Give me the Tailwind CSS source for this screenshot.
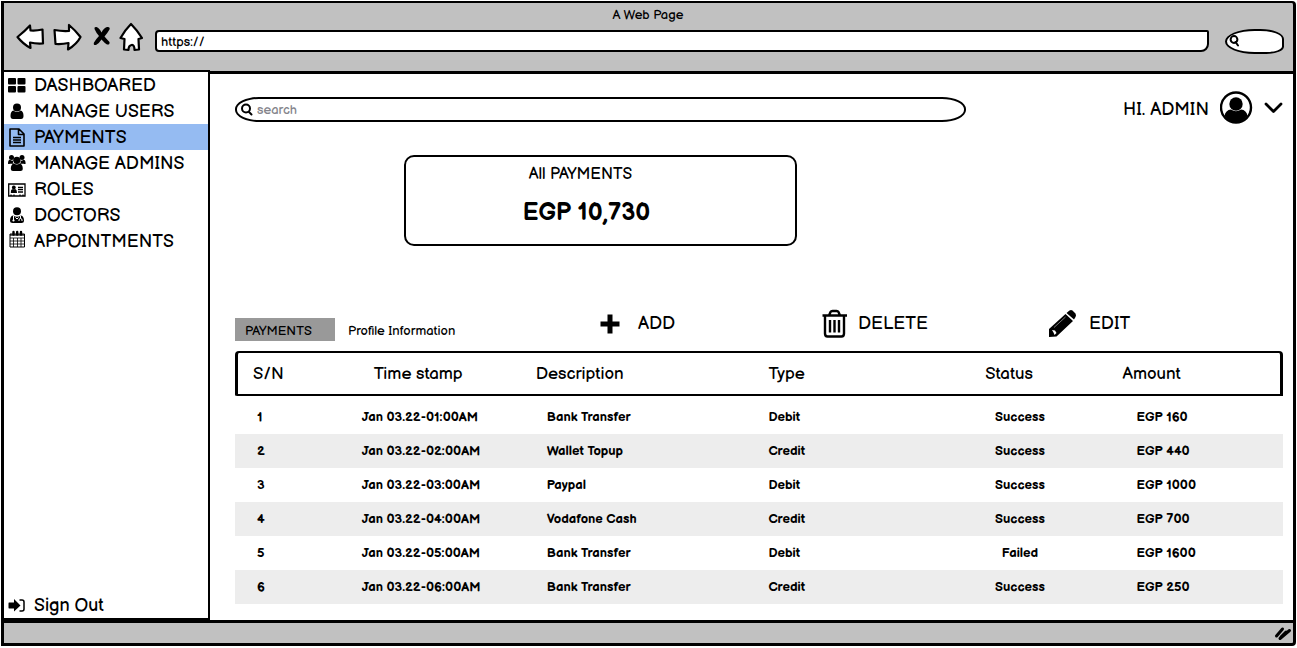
<!DOCTYPE html>
<html lang="en">
<head>
<meta charset="utf-8">
<meta name="viewport" content="width=device-width, initial-scale=1">
<title>A Web Page</title>
<script src="https://cdn.jsdelivr.net/npm/@tailwindcss/browser@4"></script>
</head>
<body class="bg-white text-black font-['Balsamiq_Sans',Inter,sans-serif]">
<div class="flex min-h-screen flex-col px-px pt-px pb-0.5">
  <!-- Browser chrome -->
  <header class="flex h-[73px] shrink-0 flex-col rounded-tr-sm border-x-3 border-t-2 border-b-3 border-black bg-[#c1c1c1] pr-[9px] pl-3">
    <p class="h-[18px] pt-0.5 pr-1 text-center text-[13px] leading-5">A Web Page</p>
    <div class="flex h-8 items-center">
      <button aria-label="Back" class="mr-2"><svg class="block" width="29" height="30" viewBox="0 0 29 30" fill="#fff" stroke="#000" stroke-width="2.2" stroke-linejoin="round"><path d="M1.500 15Q9 9 14 3.500L14.500 8.500Q20 9 26.500 7.500L27 21.500Q20 22 14 20.500L14.500 26Q7 22 1.500 15Z"/></svg></button>
      <button aria-label="Forward" class="mr-2"><svg class="block" width="30" height="30" viewBox="0 0 30 30" fill="#fff" stroke="#000" stroke-width="2.2" stroke-linejoin="round"><path d="M27.500 15Q22 8 16 3L16 9Q9 9.500 1.500 8L2.500 22Q9 22.500 15.500 21L15 27.500Q24 22 27.500 15Z"/></svg></button>
      <button aria-label="Stop" class="mr-2 pl-0.5"><svg class="block" width="18" height="30" viewBox="0 0 18 30"><path d="M1.500 7Q1 4.500 3.500 5 6.500 6 8.500 10.500 10.500 6 14 5Q17.500 4.500 16.500 7.500 14.500 11 11.500 14.500 14.500 18 16.500 20Q17 23 14 22.500 11.500 21 8.500 17.500 6 21.500 3 23 0 23.500 1 20.500 3 17 6 14 3.500 11.500 1.500 7Z"/></svg></button>
      <button aria-label="Home" class="mr-3"><svg class="block" width="24" height="30" viewBox="0 0 24 30" fill="#fff" stroke="#000" stroke-width="2.2" stroke-linejoin="round"><path d="M12 2Q6 8 1.500 16L5.500 17 5 27.500 9.500 28Q9.500 23.500 12.500 23T15.500 28L20 27.500 19.500 17 23 16Q18 8 12 2Z"/></svg></button>
      <input aria-label="Address" value="https://" class="mt-2 h-[22px] min-w-0 flex-1 rounded-[4px_2px_8px_4px] border-2 border-black bg-white px-1 pt-0.5 text-[13px] outline-none">
      <label class="mt-2 ml-4 flex h-[25px] w-[59px] items-center rounded-[50%_40%_30%_50%] border-2 border-black bg-white pl-0.5">
        <svg class="shrink-0" width="11" height="12" viewBox="0 0 11 12" fill="none" stroke="#000" stroke-width="2" stroke-linecap="round"><circle cx="5" cy="4.500" r="3.400"/><path d="M6.500 7 9 10.500"/></svg>
        <input aria-label="Browser search" class="min-w-0 flex-1 bg-transparent text-[13px] outline-none">
      </label>
    </div>
  </header>

  <div class="flex flex-1 border-r-3 border-black">
    <!-- Side menu -->
    <nav aria-label="Main" class="-mt-1 flex w-[209px] shrink-0 flex-col border-2 border-l-3 border-black bg-white text-[18px] leading-[26px] [&_svg]:-mt-0.5">
      <a href="#" class="flex h-[26px] items-center gap-2 pt-0.5 pl-1"><svg width="18" height="18" viewBox="0 0 18 18"><rect x="0" y="2" width="8" height="6.500" rx="1"/><rect x="9.500" y="2" width="8" height="6.500" rx="1"/><rect x="0" y="10" width="8" height="6.500" rx="1"/><rect x="9.500" y="10" width="8" height="6.500" rx="1"/></svg>DASHBOARED</a>
      <a href="#" class="flex h-[26px] items-center gap-2 pt-0.5 pl-1"><svg width="18" height="18" viewBox="0 0 18 18"><circle cx="9" cy="5.500" r="4"/><path d="M5.500 8.500Q9 11.500 12.500 8.500 15.500 9 15.500 14 15.500 17 13 17H5Q2.500 17 2.500 14 2.500 9 5.500 8.500Z"/></svg>MANAGE USERS</a>
      <a href="#" aria-current="page" class="flex h-[26px] items-center gap-2 bg-[#95bbf2] pt-0.5 pl-1"><svg width="18" height="20" viewBox="0 0 18 20" fill="none" stroke="#000" stroke-width="1.600" stroke-linejoin="round"><path d="M2 2H11L16 7V19H2ZM10.500 2V7.500H16M5 10.500H13M5 13H13M5 15.500H13"/></svg>PAYMENTS</a>
      <a href="#" class="flex h-[26px] items-center gap-2 pt-0.5 pl-1"><svg width="18" height="18" viewBox="0 0 18 18"><circle cx="3.500" cy="3.500" r="2.500"/><circle cx="14" cy="3.500" r="2.500"/><circle cx="8.800" cy="6.300" r="3.600"/><path d="M0 9.500Q0 6 2 5.800 4 7 5 6.500 4.500 9 5.800 9.800H2Q0 10.500 0 9.500ZM17.600 9.500Q17.600 6 15.600 5.800 13.600 7 12.600 6.500 13 9 11.800 9.800H15.600Q17.600 10.500 17.600 9.500ZM6 9.500Q9 11.500 11.600 9.500 14.800 10 14.800 15 14.800 17 12.500 17H5Q2.800 17 2.800 15 2.800 10 6 9.500Z"/></svg>MANAGE ADMINS</a>
      <a href="#" class="flex h-[26px] items-center gap-2 pt-0.5 pl-1"><svg width="18" height="18" viewBox="0 0 18 18"><path fill="none" stroke="#000" stroke-width="1.300" d="M.7 4H17V16H.7ZM3 16V14.500M6 16V14.500M12 16V14.500M15 16V14.500M10 7.500H15M10 9.700H15M10 12H15"/><circle cx="5.800" cy="7.500" r="1.900"/><path d="M4 9.300H7.600Q9 10 9 13H2.800Q2.600 10 4 9.300Z"/></svg>ROLES</a>
      <a href="#" class="flex h-[26px] items-center gap-2 pt-0.5 pl-1"><svg width="18" height="18" viewBox="0 0 18 18"><circle cx="9" cy="5.200" r="4"/><path d="M5 9.500Q9 12 13 9.500 16 10 16 15 16 17 13.500 17H4.500Q2 17 2 15 2 10 5 9.500Z"/><path d="M5.500 10V14M12.500 10V12.500M11 15V14Q11 12.500 12.500 12.500T14 14V15M7.500 11.500 9 13 10.500 11.500" fill="none" stroke="#fff" stroke-width="1"/><circle cx="5.500" cy="14.500" r="1.100" fill="#fff"/></svg>DOCTORS</a>
      <a href="#" class="flex h-[26px] items-center gap-2 pt-0.5 pl-1"><svg width="18" height="22" viewBox="0 0 18 22" fill="none" stroke="#000" stroke-width="1"><path d="M2 4H16.500V17H2Z"/><path d="M2 8H16.500M2 11H16.500M2 14H16.500M5.500 8V17M9.500 8V17M13 8V17" stroke-width=".8"/><path d="M2 5H16.500" stroke-width="1.200"/><path d="M5.500 2V4.500M9.200 2V4.500M13 2V4.500" stroke-width="2.400" stroke-linecap="round"/></svg>APPOINTMENTS</a>
      <a href="#" class="mt-auto flex h-[26px] items-center gap-2 pt-0.5 pl-1"><svg width="18" height="18" viewBox="0 0 18 18"><path d="M1 6.500H6V3L12.500 9.500 6 15.500V12.500H1Q.5 12.500 .5 11.500V7.500Q.5 6.500 1 6.500Z"/><path d="M11.500 4H14Q16 4 16 6V13Q16 15 14 15H11.500" fill="none" stroke="#000" stroke-width="1.500"/></svg>Sign Out</a>
    </nav>

    <main class="flex min-w-0 flex-1 flex-col pt-[17px] pr-[10px] pb-4 pl-[25px]">
      <div class="flex h-[33px] items-center">
        <label class="mt-1 flex h-[25px] w-[731px] min-w-0 shrink items-center gap-1 rounded-[24px/12px] border-2 border-black pl-1">
          <svg class="shrink-0" width="12" height="13" viewBox="0 0 12 13" fill="none" stroke="#000" stroke-width="2" stroke-linecap="round"><circle cx="5" cy="5.500" r="4"/><path d="M8 9 10.500 11.500"/></svg>
          <input type="search" aria-label="Search" placeholder="search" class="min-w-0 flex-1 bg-transparent pt-0.5 text-[13px] outline-none placeholder:text-[#85858c]">
        </label>
        <span class="mt-1 ml-auto text-[18px] whitespace-nowrap">HI. ADMIN</span>
        <svg class="ml-[11px] shrink-0" width="33" height="33" viewBox="0 0 33 33"><circle cx="16" cy="16.500" r="15" fill="#fff" stroke="#000" stroke-width="2.400"/><circle cx="16" cy="13" r="6.700"/><path d="M4.500 25Q5.500 19 11 18.500 16 22 21 18.500 26.500 19 27.500 25 22.500 31.500 16 31.500T4.500 25Z"/></svg>
        <button aria-label="Account menu" class="ml-[11px]"><svg class="block" width="19" height="13" viewBox="0 0 19 13" fill="none" stroke="#000" stroke-width="2.800" stroke-linecap="round" stroke-linejoin="round"><path d="M2 3 9.500 10.500 17 3"/></svg></button>
      </div>

      <section class="mt-[31px] ml-[169px] flex h-[91px] w-[393px] flex-col items-center rounded-[10px] border-2 border-black pt-1 pr-10">
        <h2 class="text-[16px] leading-7">All PAYMENTS</h2>
        <p class="mt-1.5 pl-3 text-2xl leading-9 font-bold">EGP 10,730</p>
      </section>

      <div class="mt-16 grid h-[31px] grid-cols-[365fr_222fr_226fr_235fr]">
        <div class="flex items-end gap-[13px] text-[13px] leading-[23px]">
          <button class="h-[23px] w-[100px] bg-[#999] pt-0.5 pl-2.5 text-left">PAYMENTS</button>
          <button class="h-[23px] pt-0.5">Profile Information</button>
        </div>
        <button class="flex h-[27px] items-center gap-[18px] text-[18px]"><svg width="20" height="20" viewBox="0 0 20 20" stroke="#000" stroke-width="5" stroke-linecap="square"><path d="M10 3V17M3 10H17"/></svg>ADD</button>
        <button class="flex h-[27px] items-center gap-2.5 text-[18px]"><svg width="26" height="29" viewBox="0 0 26 29" fill="none" stroke="#000" stroke-width="2.400" stroke-linejoin="round"><path d="M.5 6.500H25M7 6.500 8.500 3Q9 2 10.500 2H14.500Q16 2 16.500 3L18 6.500M3 6.500V24.500Q3 27.500 5.500 27.500H19.500Q22 27.500 22 24.500V6.500"/><path d="M8 11V23.500M12.500 11V23.500M17 11V23.500"/></svg>DELETE</button>
        <button class="flex h-[27px] items-center gap-[11px] text-[18px]"><svg width="30" height="29" viewBox="0 0 30 29"><path d="M1 20 17.500 5 25 12 8.500 27.500 1 28ZM18.500 4 21.500 1.500Q23 .5 24.500 1.500L27.500 4.500Q28.500 6.500 27.500 8L26 10.500Z"/><path d="M6 18.500 17.500 8" stroke="#777" stroke-width="1"/><path d="M4 21 7 21.500 8.500 24 6.500 26 5.500 23.500Z" fill="#fff"/></svg>EDIT</button>
      </div>

      <table class="mt-2.5 w-full table-fixed border-separate border-spacing-0 text-left text-[13px] font-bold">
        <colgroup><col class="w-[12.1%]"><col class="w-[16.6%]"><col class="w-[22.2%]"><col class="w-[20.7%]"><col class="w-[13.1%]"><col></colgroup>
        <thead class="text-[17px]">
          <tr class="h-[45px]"><th class="rounded-tl-sm rounded-bl-xs border-y-2 border-l-3 border-black pt-0.5 pb-0 pl-[15px] font-normal">S/N</th><th class="border-y-2 border-black pt-0.5 pl-3 font-normal">Time stamp</th><th class="border-y-2 border-black pt-0.5 font-normal">Description</th><th class="border-y-2 border-black pt-0.5 font-normal">Type</th><th class="border-y-2 border-black pt-0.5 font-normal">Status</th><th class="rounded-tr-sm border-y-2 border-r-3 border-black pt-0.5 font-normal">Amount</th></tr>
        </thead>
        <tbody>
          <tr class="h-[38px]"><td class="pt-1.5 pl-[22px]">1</td><td class="pt-1.5">Jan 03.22-01:00AM</td><td class="pt-1.5 pl-[11px]">Bank Transfer</td><td class="pt-1.5">Debit</td><td class="pt-1.5 pr-17 text-center">Success</td><td class="pt-1.5 pl-3.5">EGP 160</td></tr>
          <tr class="h-[34px] bg-[#ededed]"><td class="pt-0.5 pl-[22px]">2</td><td class="pt-0.5">Jan 03.22-02:00AM</td><td class="pt-0.5 pl-[11px]">Wallet Topup</td><td class="pt-0.5">Credit</td><td class="pt-0.5 pr-17 text-center">Success</td><td class="pt-0.5 pl-3.5">EGP 440</td></tr>
          <tr class="h-[34px]"><td class="pt-0.5 pl-[22px]">3</td><td class="pt-0.5">Jan 03.22-03:00AM</td><td class="pt-0.5 pl-[11px]">Paypal</td><td class="pt-0.5">Debit</td><td class="pt-0.5 pr-17 text-center">Success</td><td class="pt-0.5 pl-3.5">EGP 1000</td></tr>
          <tr class="h-[34px] bg-[#ededed]"><td class="pt-0.5 pl-[22px]">4</td><td class="pt-0.5">Jan 03.22-04:00AM</td><td class="pt-0.5 pl-[11px]">Vodafone Cash</td><td class="pt-0.5">Credit</td><td class="pt-0.5 pr-17 text-center">Success</td><td class="pt-0.5 pl-3.5">EGP 700</td></tr>
          <tr class="h-[34px]"><td class="pt-0.5 pl-[22px]">5</td><td class="pt-0.5">Jan 03.22-05:00AM</td><td class="pt-0.5 pl-[11px]">Bank Transfer</td><td class="pt-0.5">Debit</td><td class="pt-0.5 pr-17 text-center">Failed</td><td class="pt-0.5 pl-3.5">EGP 1600</td></tr>
          <tr class="h-[34px] bg-[#ededed]"><td class="pt-0.5 pl-[22px]">6</td><td class="pt-0.5">Jan 03.22-06:00AM</td><td class="pt-0.5 pl-[11px]">Bank Transfer</td><td class="pt-0.5">Credit</td><td class="pt-0.5 pr-17 text-center">Success</td><td class="pt-0.5 pl-3.5">EGP 250</td></tr>
        </tbody>
      </table>
    </main>
  </div>

  <footer class="flex h-[26px] shrink-0 items-center justify-end rounded-br-sm border-3 border-black bg-[#c1c1c1] pr-px">
    <svg width="18" height="16" viewBox="0 0 18 16" fill="none" stroke="#000" stroke-width="3" stroke-linecap="round"><path d="M2.500 11 8.500 4M6 13.500 15.500 5.500M7 12 12 7"/></svg>
  </footer>
</div>
</body>
</html>
